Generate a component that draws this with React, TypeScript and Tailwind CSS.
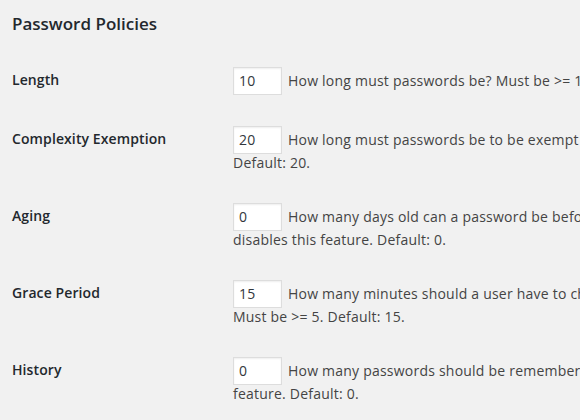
import React from "react";

type Row = { label: string; value: string; line1: string; line2?: string };

const rows: Row[] = [
  { label: "Length", value: "10", line1: "How long must passwords be? Must be >= 10. Default: 10." },
  {
    label: "Complexity Exemption",
    value: "20",
    line1: "How long must passwords be to be exempt from the complexity requirements?",
    line2: "Default: 20.",
  },
  {
    label: "Aging",
    value: "0",
    line1: "How many days old can a password be before requiring it be changed? Entering 0",
    line2: "disables this feature. Default: 0.",
  },
  {
    label: "Grace Period",
    value: "15",
    line1: "How many minutes should a user have to change their password once they find out it has expired?",
    line2: "Must be >= 5. Default: 15.",
  },
  {
    label: "History",
    value: "0",
    line1: "How many passwords should be remembered? Old passwords cannot be re-used. Entering 0 disables this",
    line2: "feature. Default: 0.",
  },
];

export default function App() {
  return (
    <div
      className="w-[580px] h-[420px] overflow-hidden bg-[#f1f1f1] pl-[12px]"
      style={{ fontFamily: '"Open Sans", "Noto Sans", sans-serif' }}
    >
      <h2 className="pt-[13px] text-[17px] leading-[22px] font-semibold text-[#23282d]">Password Policies</h2>
      <div className="mt-[16px]">
        {rows.map((r) => (
          <div key={r.label} className="flex">
            <div className="w-[210px] shrink-0 pt-[20px] pr-[10px] text-[14px] leading-[18px] font-semibold tracking-[0.1px] text-[#23282d]">
              {r.label}
            </div>
            <div className="pl-[11px] py-[15px] text-[14px] tracking-[0.22px] text-[#444] whitespace-nowrap">
              <div className="h-[29px] flex items-center">
                <input
                  readOnly
                  value={r.value}
                  className="w-[49px] h-[28px] shrink-0 bg-white border border-[#ddd] shadow-[inset_0_1px_2px_rgba(0,0,0,0.07)] px-[5px] text-[14px] text-[#32373c] outline-none"
                />
                <span className="ml-[6px]">{r.line1}</span>
              </div>
              {r.line2 && <div className="leading-[18px]">{r.line2}</div>}
            </div>
          </div>
        ))}
      </div>
    </div>
  );
}
